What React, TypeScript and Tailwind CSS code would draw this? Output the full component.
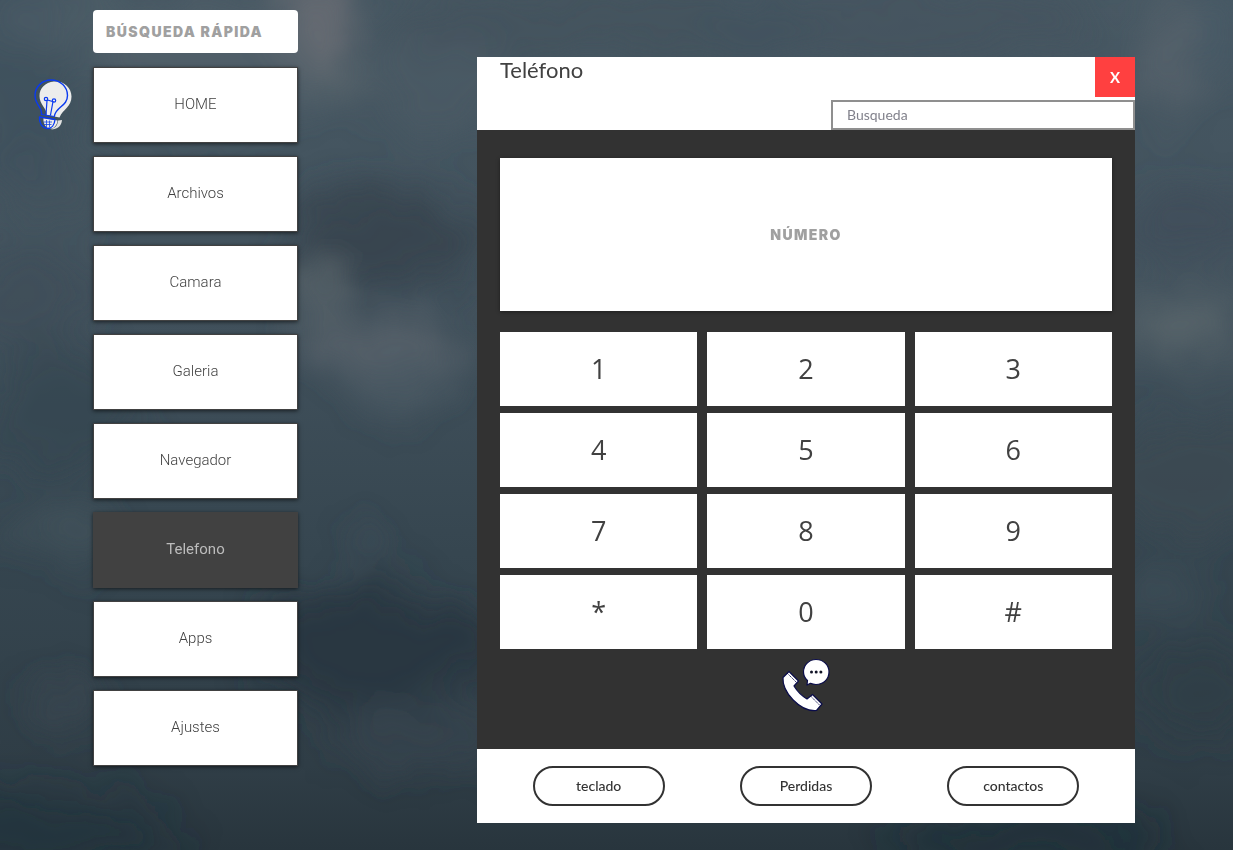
import { useState } from "react";

const navItems = ["HOME", "Archivos", "Camara", "Galeria", "Navegador", "Telefono", "Apps", "Ajustes"];
const keys = ["1", "2", "3", "4", "5", "6", "7", "8", "9", "*", "0", "#"];
const views = ["teclado", "Perdidas", "contactos"];

// [cx, cy, rx, ry, colour, opacity]
type Puff = [number, number, number, number, string, number];
const puffs: Puff[] = [
  [230, 60, 120, 60, "#56646d", 0.6],
  [315, 20, 40, 45, "#6c6f75", 0.75],
  [340, 75, 18, 22, "#666d74", 0.5],
  [20, 60, 60, 130, "#3d4f5a", 0.6],
  [50, 190, 60, 40, "#42525d", 0.5],
  [30, 300, 60, 50, "#3b4a55", 0.5],
  [60, 20, 70, 40, "#50606a", 0.5],
  [440, 80, 70, 60, "#4b5c66", 0.6],
  [385, 240, 100, 50, "#35434e", 0.85],
  [380, 345, 80, 32, "#57636c", 0.8],
  [400, 385, 50, 26, "#4f5d67", 0.6],
  [315, 290, 28, 34, "#586369", 0.75],
  [600, 20, 220, 40, "#42515c", 0.7],
  [900, 20, 200, 40, "#43535d", 0.6],
  [1165, 60, 35, 60, "#5a666e", 0.6],
  [1220, 30, 30, 50, "#475a67", 0.6],
  [1190, 225, 60, 40, "#3f4d58", 0.7],
  [1185, 325, 60, 36, "#5c676e", 0.75],
  [1190, 480, 80, 60, "#3b4953", 0.7],
  [1160, 590, 40, 20, "#44525b", 0.5],
  [60, 410, 80, 60, "#344650", 0.6],
  [65, 535, 50, 28, "#46555e", 0.6],
  [375, 650, 120, 60, "#26353e", 0.8],
  [420, 735, 90, 30, "#38464f", 0.6],
  [365, 545, 25, 14, "#3f4e5b", 0.6],
  [65, 705, 40, 22, "#3c4a52", 0.6],
  [20, 830, 160, 40, "#22303a", 0.6],
  [1030, 840, 140, 25, "#202e38", 0.7],
  [1200, 690, 60, 50, "#2f3c45", 0.6],
];

function StormSky() {
  return (
    <svg
      className="absolute inset-0 -z-10 h-full w-full"
      viewBox="0 0 1233 850"
      preserveAspectRatio="none"
      aria-hidden="true"
    >
      <defs>
        <linearGradient id="sky" x1="0" y1="0" x2="0" y2="1">
          <stop offset="0" stopColor="#475863" />
          <stop offset="0.35" stopColor="#42525d" />
          <stop offset="0.65" stopColor="#364650" />
          <stop offset="0.9" stopColor="#303e47" />
          <stop offset="1" stopColor="#28353d" />
        </linearGradient>
        <filter id="clouds" x="-20%" y="-20%" width="140%" height="140%">
          <feGaussianBlur stdDeviation="17" result="soft" />
          <feTurbulence type="fractalNoise" baseFrequency="0.014" numOctaves="4" seed="8" result="noise" />
          <feDisplacementMap in="soft" in2="noise" scale="50" xChannelSelector="R" yChannelSelector="G" />
          <feGaussianBlur stdDeviation="4" />
        </filter>
      </defs>
      <rect width="1233" height="850" fill="url(#sky)" />
      <g filter="url(#clouds)">
        {puffs.map(([cx, cy, rx, ry, fill, opacity]) => (
          <ellipse key={`${cx}-${cy}`} cx={cx} cy={cy} rx={rx} ry={ry} fill={fill} opacity={opacity} />
        ))}
      </g>
    </svg>
  );
}

function BulbIcon() {
  return (
    <svg width="40" height="54" viewBox="0 0 40 54" fill="none" aria-hidden="true">
      <path
        d="M21 3.500C30 2.500 38.500 9 38.500 18.500C38.500 29 30 31 26.500 39.500L13.500 37C14 30 6.500 27 6.500 18C6.500 10 12 4.500 21 3.500Z"
        fill="#ececec"
      />
      <path d="M10.500 40L24.500 42.500C24.500 46 22.500 48.500 19.500 50.500C13 51.500 10 46 10.500 40Z" fill="#ececec" />
      <path d="M25 42.500L29 42C28.500 48 24.500 51.500 18 51.500C22 50 25 47 25 42.500Z" fill="#e2e2e2" />
      <g stroke="#0a3af0" strokeWidth="1.400" strokeLinecap="round" strokeLinejoin="round">
        <path d="M8.500 36.500C9.500 29 2 27 2 17.500C2 8.500 9.500 2 18 2C27.500 2 34.500 9 34.500 17.500C34.500 28 23.500 28.500 21.500 37.500" />
        <path d="M8.500 36.500L21.500 38.500" strokeWidth="1" />
        <path d="M6.500 39L22 41.500C21.500 47 18.500 50.500 14.500 50.500C9 50 6 45 6.500 39Z" />
        <path d="M13 36.500L14 22.500M17.500 37L20 23.500M14.500 22L19.500 23.500" strokeWidth="1.200" />
        <circle cx="13" cy="21" r="1.700" strokeWidth="1.200" />
        <circle cx="21" cy="22.500" r="1.700" strokeWidth="1.200" />
      </g>
      <path
        d="M10.500 44H19M11 46.500H18.500M13.500 42V49M16.500 42.500V49"
        stroke="#1747e8"
        strokeWidth="0.800"
      />
    </svg>
  );
}

function CallIcon() {
  return (
    <svg width="50" height="56" viewBox="0 0 50 56" aria-hidden="true">
      <g fill="#fff" stroke="#0a0c4a" strokeWidth="1.200" strokeLinejoin="round">
        <path d="M35 1.500C42.500 1.500 48 7 48 14C48 21 42.500 26.500 35 26.500C32.500 26.500 31 26 29.500 25.300L26 27L26.500 22.500C23.500 20 22.500 17 22.500 14C22.500 7 28 1.500 35 1.500Z" />
        <path d="M8 13.500L17.500 23L13 28C16 33 21 38 26 41L31.500 36.500L41 46L35.500 52.500C19 54 1 34 2 19.500Z" />
        <path d="M6 15L15.500 24.500M29.500 38L39 47.500" fill="none" strokeWidth="0.900" strokeDasharray="1.500 0.700" />
      </g>
      <g fill="#111326">
        <circle cx="30.500" cy="14" r="1.500" />
        <circle cx="35.200" cy="14" r="1.500" />
        <circle cx="39.900" cy="14" r="1.500" />
      </g>
    </svg>
  );
}

export default function App() {
  const [number, setNumber] = useState("");

  return (
    <div className="relative isolate flex min-h-screen items-start overflow-hidden font-['Lato',sans-serif] text-[#414141]">
      <StormSky />

      <aside className="flex shrink-0 items-start gap-5 pt-2.5 pl-[33px]">
        <button type="button" aria-label="Luz" className="mt-[68px]">
          <BulbIcon />
        </button>
        <div className="w-[205px]">
          <input
            type="search"
            aria-label="Búsqueda rápida"
            placeholder="BÚSQUEDA RÁPIDA"
            className="block h-[43px] w-full rounded bg-white px-[13px] font-['Inter',sans-serif] text-sm font-black tracking-widest outline-none placeholder:text-[#a0a0a0]"
          />
          <nav className="mt-3.5 flex flex-col gap-[13px] font-['Roboto',sans-serif]">
            {navItems.map((item) => {
              const active = item === "Telefono";
              return (
                <a
                  key={item}
                  href={`#${item.toLowerCase()}`}
                  aria-current={active ? "page" : undefined}
                  className={`flex h-[76px] items-center justify-center border border-[#414141] pb-0.5 text-[15px] shadow-[0_1px_4px_rgba(0,0,0,0.6)] ${
                    active ? "bg-[#414141] font-normal text-[#bcbcbc]" : "bg-white font-light text-[#414141]"
                  }`}
                >
                  {item}
                </a>
              );
            })}
          </nav>
        </div>
      </aside>

      <main className="mt-[57px] mr-[98px] ml-[179px] min-w-[480px] flex-1">
        <header className="grid grid-cols-[1fr_auto] bg-white">
          <h1 className="pl-[23px] text-[22px] leading-[26px]">Teléfono</h1>
          <button type="button" className="size-10 justify-self-end bg-[#ff4040] text-[15px] font-bold text-white">
            X
          </button>
          <input
            type="search"
            aria-label="Busqueda"
            placeholder="Busqueda"
            className="col-span-2 mt-[3px] h-[30px] w-[304px] justify-self-end border-2 border-[#8f8f8f] bg-white px-3.5 pb-0.5 text-sm outline-none placeholder:text-[#82828c]"
          />
        </header>

        <section className="bg-[#323232] px-[23px] pt-7 pb-[35px]">
          <input
            type="tel"
            aria-label="Número"
            placeholder="NÚMERO"
            value={number}
            onChange={(event) => setNumber(event.target.value)}
            className="block h-[153px] w-full bg-white text-center font-['Inter',sans-serif] text-sm font-black tracking-widest shadow-[0_1px_4px_rgba(0,0,0,0.4)] outline-none placeholder:text-[#a0a0a0]"
          />
          <div className="mt-[21px] grid grid-cols-3 gap-x-2.5 gap-y-[7px]">
            {keys.map((key) => (
              <button
                key={key}
                type="button"
                onClick={() => setNumber(number + key)}
                className="h-[74px] bg-white font-['Open_Sans',sans-serif] text-[27px]"
              >
                {key}
              </button>
            ))}
          </div>
          <div className="mt-[9px] flex justify-center">
            <button type="button" aria-label="Llamar">
              <CallIcon />
            </button>
          </div>
        </section>

        <footer className="grid h-[74px] grid-cols-3 place-items-center gap-x-2.5 bg-white px-[23px]">
          {views.map((view) => (
            <button
              key={view}
              type="button"
              className="h-10 w-[132px] rounded-full border-2 border-[#323232] text-sm font-medium text-[#323232]"
            >
              {view}
            </button>
          ))}
        </footer>
      </main>
    </div>
  );
}
